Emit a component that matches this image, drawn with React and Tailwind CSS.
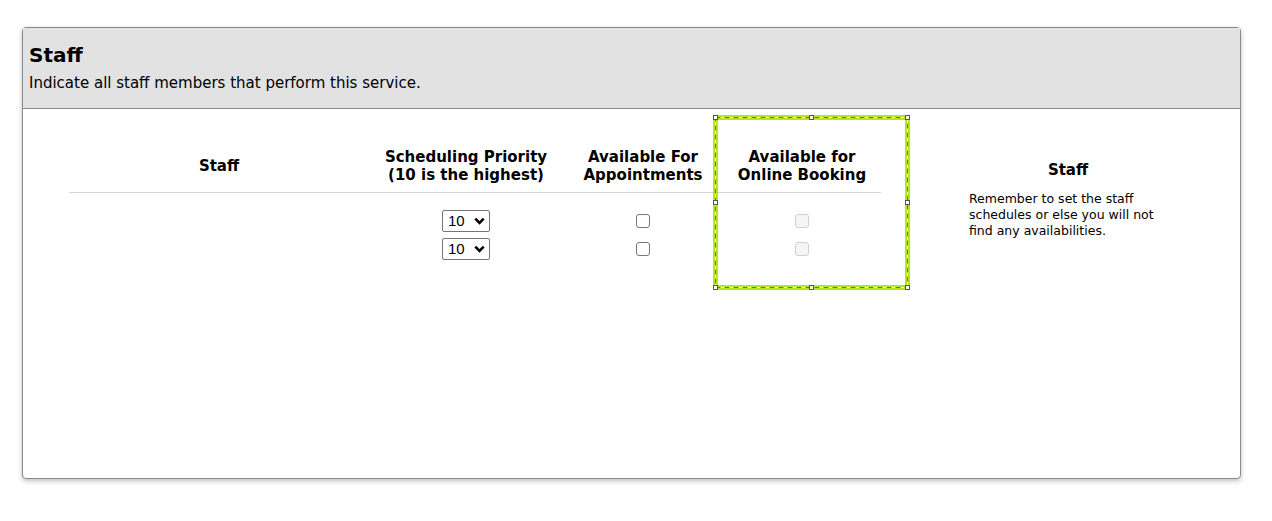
import React from "react";

function Sel() {
  return (
    <div className="mx-auto flex h-[22px] w-[48px] items-center justify-between rounded-[2px] border border-[#767676] bg-white pl-[5px] pr-[4px] text-[15px] font-['Liberation_Sans',Arial,sans-serif] text-black">
      <span>10</span>
      <svg width="11" height="8" viewBox="0 0 11 8"><path d="M1.3 1.6 L5.5 5.8 L9.7 1.6" fill="none" stroke="#000" strokeWidth="2.6" /></svg>
    </div>
  );
}

function Cb({ disabled }) {
  return (
    <div className={disabled ? "mx-auto h-[14px] w-[14px] rounded-[3px] border border-[#cfcfcf] bg-[#f5f5f5]" : "mx-auto h-[14px] w-[14px] rounded-[3px] border border-[#767676] bg-white"} />
  );
}

const handles = [
  [0, 0], [0.5, 0], [1, 0], [0, 0.5], [1, 0.5], [0, 1], [0.5, 1], [1, 1],
];

export default function App() {
  const W = 197, H = 175;
  return (
    <div className="min-h-[521px] bg-white pl-[22px] pt-[27px] font-['DejaVu_Sans',Verdana,sans-serif] text-black">
      <div className="relative h-[452px] w-[1219px] rounded-[4px] border border-[#8a8a8a] bg-white shadow-[0_2px_5px_rgba(0,0,0,0.25)]">
        <div className="h-[81px] border-b border-[#8a8a8a] bg-[#e2e2e2] px-[6px] pt-[14px]">
          <h1 className="text-[20px] font-bold leading-[26px]">Staff</h1>
          <p className="mt-[5px] text-[15px] leading-[20px]">Indicate all staff members that perform this service.</p>
        </div>
        <div className="flex pl-[46px] pt-[30px]">
          <div className="w-[812px]">
            <div className="flex h-[54px] items-center border-b border-[#d4d4d4] text-center text-[15px] font-bold leading-[18px]">
              <div className="w-[300px]">Staff</div>
              <div className="w-[194px]">Scheduling Priority<br />(10 is the highest)</div>
              <div className="w-[160px]">Available For<br />Appointments</div>
              <div className="w-[158px]">Available for<br />Online Booking</div>
            </div>
            <div className="pt-[14px]">
              {[0, 1].map((i) => (
                <div key={i} className="flex h-[28px] items-center">
                  <div className="w-[300px]" />
                  <div className="w-[194px]"><Sel /></div>
                  <div className="w-[160px]"><Cb /></div>
                  <div className="w-[158px]"><Cb disabled /></div>
                </div>
              ))}
            </div>
          </div>
          <div className="ml-[88px] w-[198px] pt-[21px]">
            <div className="text-center text-[15px] font-bold leading-[20px]">Staff</div>
            <p className="mt-[11px] text-[12.5px] leading-[16px]">Remember to set the staff schedules or else you will not find any availabilities.</p>
          </div>
        </div>
        <div className="pointer-events-none absolute left-[690px] top-[87px] h-[175px] w-[197px]">
          <svg width={W} height={H} className="absolute left-0 top-0">
            <rect x="2.5" y="2.5" width={W - 5} height={H - 5} fill="none" stroke="#b5e61d" strokeWidth="5" />
            <rect x="2.5" y="2.5" width={W - 5} height={H - 5} fill="none" stroke="#ffffff" strokeWidth="1" />
            <rect x="2.5" y="2.5" width={W - 5} height={H - 5} fill="none" stroke="#1a7fd0" strokeWidth="1" strokeDasharray="5 4" />
            {handles.map(([fx, fy], i) => (
              <rect key={i} x={Math.round(fx * (W - 5)) + 0.5} y={Math.round(fy * (H - 5)) + 0.5} width="4" height="4" fill="#fff" stroke="#555" strokeWidth="1" />
            ))}
          </svg>
        </div>
      </div>
    </div>
  );
}
